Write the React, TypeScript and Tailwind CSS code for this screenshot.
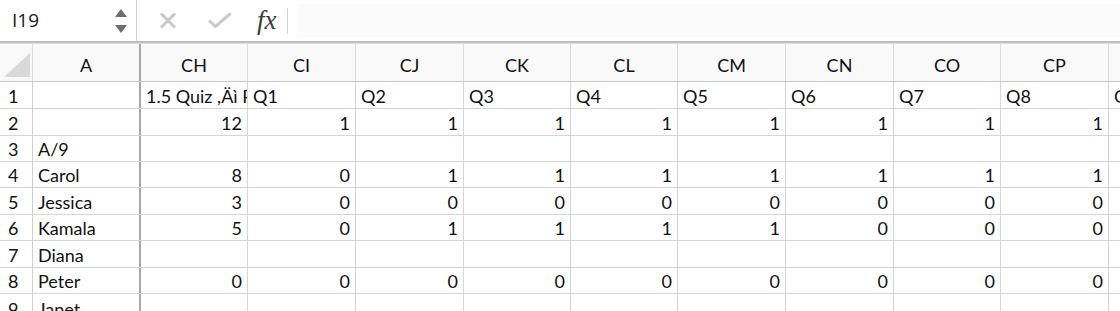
import React from "react";

const colWidths = [33, 108, 107, 108, 108, 107, 107, 108, 108, 107, 108, 120];
const headers = ["", "A", "CH", "CI", "CJ", "CK", "CL", "CM", "CN", "CO", "CP", ""];
const rowHeights = [27, 27, 26, 26, 27, 26, 27, 26, 30];

type Cell = string | number | null;
const rows: Cell[][] = [
  [null, "1.5 Quiz ,Äì Practice", "Q1", "Q2", "Q3", "Q4", "Q5", "Q6", "Q7", "Q8", "Q9"],
  [null, 12, 1, 1, 1, 1, 1, 1, 1, 1, null],
  ["A/9", null, null, null, null, null, null, null, null, null, null],
  ["Carol", 8, 0, 1, 1, 1, 1, 1, 1, 1, null],
  ["Jessica", 3, 0, 0, 0, 0, 0, 0, 0, 0, null],
  ["Kamala", 5, 0, 1, 1, 1, 1, 0, 0, 0, null],
  ["Diana", null, null, null, null, null, null, null, null, null, null],
  ["Peter", 0, 0, 0, 0, 0, 0, 0, 0, 0, null],
  ["Janet", null, null, null, null, null, null, null, null, null, null],
];

const cellFont = { fontFamily: "Lato, 'Open Sans', sans-serif" };

export default function App() {
  return (
    <div className="w-[1120px] h-[311px] overflow-hidden bg-white text-[#111]" style={cellFont}>
      {/* Toolbar */}
      <div className="flex h-[43px] border-b-2 border-[#bfbfbf] bg-white">
        <div className="flex w-[137px] shrink-0 items-center justify-between border-r border-[#d2d2d2] pl-[12px] pr-[9px]">
          <span className="text-[19px] text-[#1a1a1a]" style={{ fontFamily: "'Open Sans', sans-serif" }}>I19</span>
          <div className="flex flex-col items-center gap-[8px]">
            <svg width="12" height="8" viewBox="0 0 12 8"><path d="M6 0 L12 8 L0 8 Z" fill="#6e6e6e" /></svg>
            <svg width="12" height="8" viewBox="0 0 12 8"><path d="M0 0 L12 0 L6 8 Z" fill="#6e6e6e" /></svg>
          </div>
        </div>
        <div className="flex items-center pl-[22px]">
          <svg width="18" height="17" viewBox="0 0 18 17">
            <path d="M2 1.5 L16 15.5 M16 1.5 L2 15.5" stroke="#c9c9c9" strokeWidth="3" strokeLinecap="butt" />
          </svg>
          <svg className="ml-[30px]" width="26" height="17" viewBox="0 0 26 17">
            <path d="M2 8.5 L8.5 14.5 L23.5 1.5" stroke="#c9c9c9" strokeWidth="3" fill="none" />
          </svg>
          <span
            className="ml-[24px] text-[27px] italic text-[#3c3c3c] leading-none"
            style={{ fontFamily: "'Liberation Serif', 'DejaVu Serif', serif" }}
          >
            fx
          </span>
          <div className="ml-[10px] h-[26px] w-px bg-[#d4d4d4]" />
        </div>
        <div className="ml-[9px] my-[4px] flex-1 bg-[#fbfbfb]" />
      </div>

      {/* Column header */}
      <div className="flex h-[39px] border-t border-[#dedede] border-b border-b-[#c6c6c6] bg-[#f9f9f9]">
        {headers.map((h, i) => (
          <div
            key={i}
            className={
              "relative flex shrink-0 items-center justify-center pt-[6px] text-[18px] " +
              (i === 1 ? "border-r-2 border-[#a6a6a6]" : "border-r border-[#dcdcdc]")
            }
            style={{ width: colWidths[i] }}
          >
            {i === 0 ? (
              <svg className="absolute left-[4px] top-[9px]" width="26" height="24" viewBox="0 0 26 24">
                <path d="M0 24 L26 24 L26 0 Z" fill="#d9d9d9" />
              </svg>
            ) : (
              h
            )}
          </div>
        ))}
      </div>

      {/* Rows */}
      {rows.map((r, ri) => (
        <div key={ri} className="flex border-b border-[#d6d6d6]" style={{ height: rowHeights[ri] }}>
          <div
            className="flex shrink-0 items-center border-r border-[#cfcfcf] bg-white pl-[8px] pt-[2px] text-[18px]"
            style={{ width: colWidths[0] }}
          >
            {ri + 1}
          </div>
          {r.map((c, ci) => {
            const isNum = typeof c === "number";
            return (
              <div
                key={ci}
                className={
                  "flex shrink-0 items-center overflow-hidden whitespace-nowrap pt-[2px] text-[18px] " +
                  (isNum ? "justify-end pr-[5px] " : "justify-start pl-[5px] ") +
                  (ci === 0 ? "border-r-2 border-[#a6a6a6]" : "border-r border-[#d6d6d6]")
                }
                style={{ width: colWidths[ci + 1] }}
              >
                {c === null ? "" : String(c)}
              </div>
            );
          })}
        </div>
      ))}
    </div>
  );
}
